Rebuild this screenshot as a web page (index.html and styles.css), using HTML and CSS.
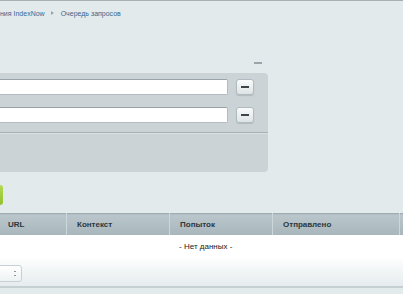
FILE: index.html
```html
<!DOCTYPE html>
<html lang="ru">
<head>
    <meta charset="UTF-8">
    <title>Очередь запросов</title>
    <link rel="stylesheet" href="styles.css">
</head>
<body>
    <div class="breadcrumbs">
        <a href="#" class="crumb">ния IndexNow</a>
        <span class="crumb-arrow"></span>
        <a href="#" class="crumb">Очередь запросов</a>
    </div>

    <div class="filter-head">
        <span class="filter-hide"></span>
    </div>

    <form class="filter">
        <div class="filter-row">
            <input type="text" class="filter-input">
            <button type="button" class="btn-minus"><span></span></button>
        </div>
        <div class="filter-row">
            <input type="text" class="filter-input">
            <button type="button" class="btn-minus"><span></span></button>
        </div>
        <div class="filter-bottom"></div>
    </form>

    <div class="actions">
        <button class="btn-green" aria-label="Найти"></button>
    </div>

    <table class="grid">
        <thead>
            <tr>
                <th class="col-url">URL</th>
                <th class="col-ctx">Контекст</th>
                <th class="col-try">Попыток</th>
                <th class="col-sent">Отправлено</th>
                <th></th>
            </tr>
        </thead>
        <tbody>
            <tr>
                <td colspan="5" class="empty">- Нет данных -</td>
            </tr>
        </tbody>
    </table>

    <div class="grid-footer">
        <div class="page-size">
            <span class="arrows"></span>
        </div>
    </div>
</body>
</html>
```

FILE: styles.css
```css
body {
    margin: 0;
    background-color: #e3eaec;
    border-top: 1px solid #a7afb2;
    font-family: "Liberation Sans", Arial, sans-serif;
    font-size: 8px;
    overflow: hidden;
}

.breadcrumbs {
    display: flex;
    align-items: center;
    height: 22px;
    padding-top: 1px;
    font-size: 7px;
}

.crumb {
    color: #3a6890;
    text-decoration: none;
}

.crumb-arrow {
    width: 0;
    height: 0;
    margin: 0 7px 0 6px;
    border-left: 3px solid #9aa4a9;
    border-top: 2px solid transparent;
    border-bottom: 2px solid transparent;
}

.filter-head {
    display: flex;
    justify-content: flex-end;
    width: 262px;
    height: 49px;
    align-items: flex-end;
}

.filter-hide {
    width: 8px;
    height: 2px;
    margin-bottom: 9px;
    background-color: #9ba4a8;
}

.filter {
    width: 268px;
    margin: 0;
    padding-top: 6px;
    background-color: #cbd3d7;
    border-radius: 0 4px 4px 0;
    box-sizing: border-box;
}

.filter-row {
    display: flex;
    gap: 8px;
    padding-right: 14px;
    height: 16px;
    margin-bottom: 12px;
}

.filter-row + .filter-row {
    margin-bottom: 9px;
}

.filter-input {
    flex: 1;
    margin: 0 0 0 -6px;
    padding: 0;
    background-color: #fff;
    border: 1px solid #b3bdc1;
    border-top-color: #99a4a9;
    border-radius: 2px;
}

.btn-minus {
    display: flex;
    align-items: center;
    justify-content: center;
    width: 18px;
    height: 16px;
    padding: 0;
    border: 1px solid #b2bcc0;
    border-radius: 3px;
    background: linear-gradient(#fafbfb, #dde3e5);
    box-shadow: 0 1px 1px rgba(0, 0, 0, 0.12);
}

.btn-minus span {
    width: 8px;
    height: 2px;
    background-color: #3c4449;
}

.filter-bottom {
    height: 39px;
    border-top: 1px solid #a7b1b5;
    box-shadow: inset 0 1px 0 #dbe1e3;
}

.actions {
    padding: 13px 0 8px;
}

.btn-green {
    display: block;
    width: 63px;
    height: 20px;
    margin-left: -60px;
    border: none;
    border-radius: 3px;
    background: linear-gradient(#b4da52, #91c12c);
}

.grid {
    width: 416px;
    margin-left: -2px;
    border-collapse: collapse;
    table-layout: fixed;
}

.grid th {
    height: 21px;
    padding: 0 0 0 10px;
    text-align: left;
    font-weight: bold;
    color: #2a373d;
    background: linear-gradient(#bac6cb, #a8b6bc);
    border-top: 1px solid #9fadb3;
    border-right: 1px solid #cdd7da;
}

.grid th.col-url {
    width: 58px;
}

.grid th.col-ctx {
    width: 92px;
}

.grid th.col-try {
    width: 92px;
}

.grid th.col-sent {
    width: 116px;
}

.grid td {
    height: 23px;
    padding: 0;
    background-color: #fff;
}

.empty {
    text-align: center;
    color: #222;
}

.grid-footer {
    height: 30px;
    background: linear-gradient(#fdfefe, #e6ecee);
    border-bottom: 2px solid #c6cfd2;
    box-sizing: border-box;
    padding-top: 7px;
}

.page-size {
    position: relative;
    width: 28px;
    height: 17px;
    margin-left: -6px;
    background: linear-gradient(#fff, #eef2f3);
    border: 1px solid #c7d0d3;
    border-radius: 3px;
    box-sizing: border-box;
}

.arrows {
    position: absolute;
    left: 19px;
    top: 5px;
    width: 2px;
    height: 5px;
    border-top: 1px solid #8e989c;
    border-bottom: 1px solid #8e989c;
    box-sizing: border-box;
}
```
